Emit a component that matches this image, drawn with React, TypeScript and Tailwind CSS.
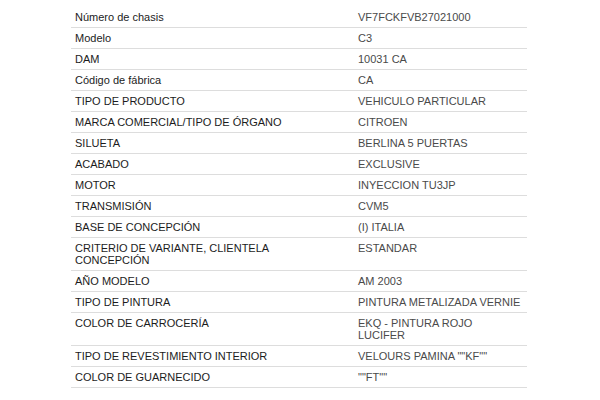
const ROWS: { label: string; value: string }[] = [
  { label: 'Número de chasis', value: 'VF7FCKFVB27021000' },
  { label: 'Modelo', value: 'C3' },
  { label: 'DAM', value: '10031 CA' },
  { label: 'Código de fábrica', value: 'CA' },
  { label: 'TIPO DE PRODUCTO', value: 'VEHICULO PARTICULAR' },
  { label: 'MARCA COMERCIAL/TIPO DE ÓRGANO', value: 'CITROEN' },
  { label: 'SILUETA', value: 'BERLINA 5 PUERTAS' },
  { label: 'ACABADO', value: 'EXCLUSIVE' },
  { label: 'MOTOR', value: 'INYECCION TU3JP' },
  { label: 'TRANSMISIÓN', value: 'CVM5' },
  { label: 'BASE DE CONCEPCIÓN', value: '(I) ITALIA' },
  { label: 'CRITERIO DE VARIANTE, CLIENTELA\nCONCEPCIÓN', value: 'ESTANDAR' },
  { label: 'AÑO MODELO', value: 'AM 2003' },
  { label: 'TIPO DE PINTURA', value: 'PINTURA METALIZADA VERNIE' },
  { label: 'COLOR DE CARROCERÍA', value: 'EKQ - PINTURA ROJO\nLUCIFER' },
  { label: 'TIPO DE REVESTIMIENTO INTERIOR', value: 'VELOURS PAMINA ""KF""' },
  { label: 'COLOR DE GUARNECIDO', value: '""FT""' },
];

export default function App() {
  return (
    <div className="w-[600px] h-[400px] bg-white pt-[7px] pl-[71px] font-['Liberation_Sans',Arial,sans-serif] text-[11px] leading-[12px]">
      <div className="w-[456px]">
        {ROWS.map((row) => (
          <div key={row.label} className="flex border-b border-[#dddddd]">
            <div className="w-[283px] shrink-0 py-1 pl-1 pr-2 text-[#1c1c1c] whitespace-pre-line">
              {row.label}
            </div>
            <div className="flex-1 py-1 pl-1 text-[#4a4a4a] whitespace-pre-line">
              {row.value}
            </div>
          </div>
        ))}
      </div>
    </div>
  );
}
